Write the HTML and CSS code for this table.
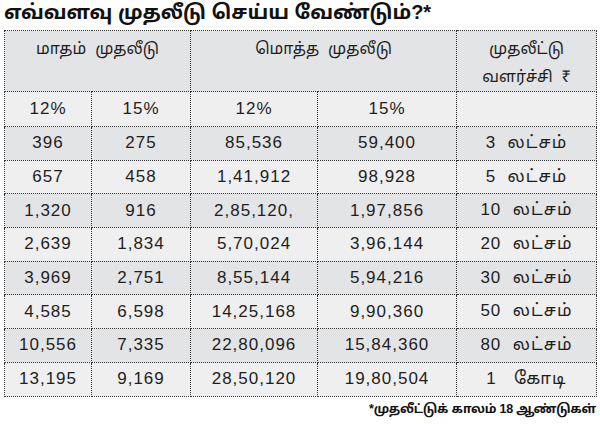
FILE: index.html
```html
<!DOCTYPE html>
<html lang="ta">
<head>
<meta charset="utf-8">
<title>எவ்வளவு முதலீடு செய்ய வேண்டும்?</title>
<link rel="stylesheet" href="styles.css">
</head>
<body>
<div class="page">
  <h1 class="title">எவ்வளவு முதலீடு செய்ய வேண்டும்?*</h1>
  <table class="grid">
    <colgroup>
      <col class="c1"><col class="c2"><col class="c3"><col class="c4"><col class="c5">
    </colgroup>
    <thead>
      <tr class="head">
        <th colspan="2">மாதம்&nbsp; முதலீடு</th>
        <th colspan="2">மொத்த&nbsp; முதலீடு</th>
        <th>முதலீட்டு<br>வளர்ச்சி&nbsp; ₹</th>
      </tr>
      <tr class="rates">
        <td>12%</td><td>15%</td><td>12%</td><td>15%</td><td></td>
      </tr>
    </thead>
    <tbody>
      <tr><td>396</td><td>275</td><td>85,536</td><td>59,400</td><td>3&nbsp; லட்சம்</td></tr>
      <tr><td>657</td><td>458</td><td>1,41,912</td><td>98,928</td><td>5&nbsp; லட்சம்</td></tr>
      <tr><td>1,320</td><td>916</td><td>2,85,120,</td><td>1,97,856</td><td>10&nbsp; லட்சம்</td></tr>
      <tr><td>2,639</td><td>1,834</td><td>5,70,024</td><td>3,96,144</td><td>20&nbsp; லட்சம்</td></tr>
      <tr><td>3,969</td><td>2,751</td><td>8,55,144</td><td>5,94,216</td><td>30&nbsp; லட்சம்</td></tr>
      <tr><td>4,585</td><td>6,598</td><td>14,25,168</td><td>9,90,360</td><td>50&nbsp; லட்சம்</td></tr>
      <tr><td>10,556</td><td>7,335</td><td>22,80,096</td><td>15,84,360</td><td>80&nbsp; லட்சம்</td></tr>
      <tr><td>13,195</td><td>9,169</td><td>28,50,120</td><td>19,80,504</td><td>1&nbsp;&nbsp; கோடி</td></tr>
    </tbody>
  </table>
  <p class="note">*முதலீட்டுக் காலம் 18 ஆண்டுகள்</p>
</div>
</body>
</html>
```
FILE: styles.css
```css
html, body {
  margin: 0;
  padding: 0;
  background: #ffffff;
}
.page {
  width: 600px;
  height: 424px;
  padding: 0 4px;
  box-sizing: border-box;
  font-family: "Liberation Sans", "Noto Sans Tamil", "Noto Sans", sans-serif;
  color: #1e1e1e;
}
.title {
  margin: 0;
  height: 30px;
  font-size: 20px;
  line-height: 25px;
  font-weight: bold;
  color: #111;
}
.grid {
  border-collapse: collapse;
  table-layout: fixed;
  width: 592px;
  font-size: 17px;
  letter-spacing: 1px;
}
.c1 { width: 87px; }
.c2 { width: 99px; }
.c3 { width: 127px; }
.c4 { width: 139px; }
.c5 { width: 140px; }
.grid th, .grid td {
  border: 1px dotted #333;
  text-align: center;
  padding: 0;
  font-weight: normal;
}
.head th {
  height: 55px;
  vertical-align: top;
  padding-top: 4px;
  line-height: 28px;
  letter-spacing: 0;
  font-size: 16px;
  background: #e3e4e6;
}
.rates td {
  height: 34px;
  background: #efefef;
}
tbody td {
  height: 32.7px;
}
tbody tr:nth-child(odd) td { background: #e3e4e6; }
tbody tr:nth-child(even) td { background: #efefef; }
.note {
  margin: 5px 0 0;
  text-align: right;
  font-size: 12.5px;
  letter-spacing: -0.2px;
  font-weight: bold;
  color: #111;
}
```
